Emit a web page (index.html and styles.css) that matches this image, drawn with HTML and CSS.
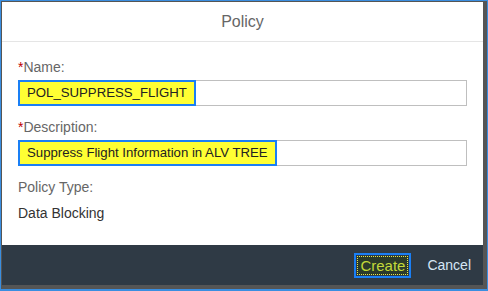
FILE: index.html
```html
<!DOCTYPE html>
<html lang="en">
<head>
    <meta charset="UTF-8">
    <meta name="viewport" content="width=device-width, initial-scale=1.0">
    <title>Policy</title>
    <link rel="stylesheet" href="styles.css">
</head>
<body>
    <div class="frame">
        <div class="dialog">
            <div class="dialog-header">Policy</div>

            <div class="dialog-content">
                <label class="field-label"><span class="req">*</span>Name:</label>
                <div class="input">
                    <span class="mark">POL_SUPPRESS_FLIGHT</span>
                </div>

                <label class="field-label"><span class="req">*</span>Description:</label>
                <div class="input">
                    <span class="mark">Suppress Flight Information in ALV TREE</span>
                </div>

                <div class="field-label plain">Policy Type:</div>
                <div class="field-value">Data Blocking</div>
            </div>

            <div class="dialog-footer">
                <button class="btn btn-create"><span>Create</span></button>
                <button class="btn btn-cancel">Cancel</button>
            </div>
        </div>
    </div>
</body>
</html>
```

FILE: styles.css
```css
html, body {
    margin: 0;
    padding: 0;
}
body {
    width: 488px;
    height: 291px;
    font-family: 'Liberation Sans', Arial, sans-serif;
    background-color: #3a8ee0;
}
.frame {
    box-sizing: border-box;
    height: 291px;
    border: 1px solid #3a8ee0;
    border-bottom-width: 2px;
    background-color: #555;
    padding: 1px 4px 4px 1px;
}
.dialog {
    height: 100%;
    display: flex;
    flex-direction: column;
    background-color: #fff;
}
.dialog-header {
    height: 39px;
    line-height: 40px;
    text-align: center;
    font-size: 16px;
    color: #666;
    border-bottom: 1px solid #e5e5e5;
    flex-shrink: 0;
}
.dialog-content {
    flex: 1;
    padding: 16px 16px 0 16px;
}
.field-label {
    display: block;
    font-size: 14px;
    color: #666;
    height: 18px;
    line-height: 18px;
    margin-bottom: 4px;
}
.field-label .req {
    color: #bb0000;
}
.field-label.plain {
    margin-top: 12px;
}
.input {
    box-sizing: border-box;
    height: 26px;
    border: 1px solid #bfbfbf;
    display: flex;
    align-items: stretch;
    margin-bottom: 12px;
}
.mark {
    margin: -1px 0 -1px -1px;
    padding: 0 7px;
    background-color: #ffff33;
    border: 2px solid #1a7ff5;
    font-size: 13.2px;
    color: #222;
    line-height: 22px;
}
.field-value {
    margin-top: 9px;
    font-size: 14px;
    line-height: 16px;
    color: #333;
}
.dialog-footer {
    height: 40px;
    flex-shrink: 0;
    background-color: #2f3a45;
    display: flex;
    align-items: center;
    justify-content: flex-end;
    padding-right: 12px;
}
.btn {
    background: none;
    border: none;
    font-family: inherit;
    font-size: 14px;
    cursor: pointer;
    padding: 0;
}
.btn-create {
    box-sizing: border-box;
    width: 57px;
    height: 25px;
    border: 2px solid #1a7ff5;
    padding: 1px;
    margin-right: 16px;
}
.btn-create span {
    display: block;
    height: 100%;
    font-size: 15px;
    line-height: 17px;
    border: 1px dotted #e8e84a;
    box-sizing: border-box;
    background-color: #2b3a2a;
    color: #c3d93a;
}
.btn-cancel {
    color: #d6e6f5;
}
```
